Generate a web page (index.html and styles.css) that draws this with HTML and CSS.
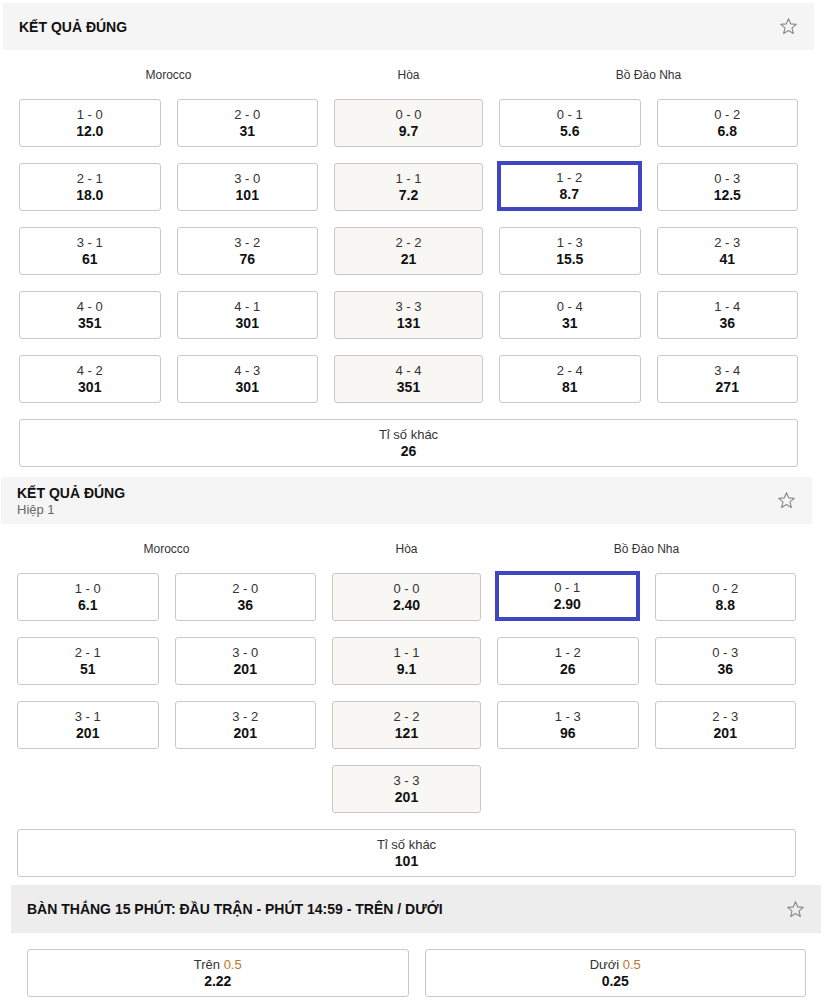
FILE: index.html
```html
<!DOCTYPE html>
<html lang="vi">
<head>
    <meta charset="UTF-8">
    <title>Kết quả đúng</title>
    <link rel="stylesheet" href="styles.css">
</head>
<body>
    <!-- ket qua dung: ca tran -->
    <div class="mk mk1">
      <div class="mkhd">
        <div class="ttl">
          <b>KẾT QUẢ ĐÚNG</b>
        </div>
        <svg class="star" viewBox="0 0 20 20"><polygon points="10,1.8 12.4,7.3 18.2,7.7 13.7,11.5 15.1,17.4 10,14.2 4.9,17.4 6.3,11.5 1.8,7.7 7.6,7.3"/></svg>
      </div>
      <div class="teams">
        <span class="tm2">Morocco</span>
        <span>Hòa</span>
        <span class="tm2">Bồ Đào Nha</span>
      </div>
      <div class="grid">
        <div class="c"><span>1 - 0</span><b>12.0</b></div>
        <div class="c"><span>2 - 0</span><b>31</b></div>
        <div class="c dr"><span>0 - 0</span><b>9.7</b></div>
        <div class="c"><span>0 - 1</span><b>5.6</b></div>
        <div class="c"><span>0 - 2</span><b>6.8</b></div>

        <div class="c"><span>2 - 1</span><b>18.0</b></div>
        <div class="c"><span>3 - 0</span><b>101</b></div>
        <div class="c dr"><span>1 - 1</span><b>7.2</b></div>
        <div class="c on"><span>1 - 2</span><b>8.7</b></div>
        <div class="c"><span>0 - 3</span><b>12.5</b></div>

        <div class="c"><span>3 - 1</span><b>61</b></div>
        <div class="c"><span>3 - 2</span><b>76</b></div>
        <div class="c dr"><span>2 - 2</span><b>21</b></div>
        <div class="c"><span>1 - 3</span><b>15.5</b></div>
        <div class="c"><span>2 - 3</span><b>41</b></div>

        <div class="c"><span>4 - 0</span><b>351</b></div>
        <div class="c"><span>4 - 1</span><b>301</b></div>
        <div class="c dr"><span>3 - 3</span><b>131</b></div>
        <div class="c"><span>0 - 4</span><b>31</b></div>
        <div class="c"><span>1 - 4</span><b>36</b></div>

        <div class="c"><span>4 - 2</span><b>301</b></div>
        <div class="c"><span>4 - 3</span><b>301</b></div>
        <div class="c dr"><span>4 - 4</span><b>351</b></div>
        <div class="c"><span>2 - 4</span><b>81</b></div>
        <div class="c"><span>3 - 4</span><b>271</b></div>

        <div class="c full"><span>Tỉ số khác</span><b>26</b></div>
      </div>
    </div>

    <!-- ket qua dung: hiep 1 -->
    <div class="mk mk2">
      <div class="mkhd">
        <div class="ttl">
          <b>KẾT QUẢ ĐÚNG</b>
          <small>Hiệp 1</small>
        </div>
        <svg class="star" viewBox="0 0 20 20"><polygon points="10,1.8 12.4,7.3 18.2,7.7 13.7,11.5 15.1,17.4 10,14.2 4.9,17.4 6.3,11.5 1.8,7.7 7.6,7.3"/></svg>
      </div>
      <div class="teams">
        <span class="tm2">Morocco</span>
        <span>Hòa</span>
        <span class="tm2">Bồ Đào Nha</span>
      </div>
      <div class="grid">
        <div class="c"><span>1 - 0</span><b>6.1</b></div>
        <div class="c"><span>2 - 0</span><b>36</b></div>
        <div class="c dr"><span>0 - 0</span><b>2.40</b></div>
        <div class="c on"><span>0 - 1</span><b>2.90</b></div>
        <div class="c"><span>0 - 2</span><b>8.8</b></div>

        <div class="c"><span>2 - 1</span><b>51</b></div>
        <div class="c"><span>3 - 0</span><b>201</b></div>
        <div class="c dr"><span>1 - 1</span><b>9.1</b></div>
        <div class="c"><span>1 - 2</span><b>26</b></div>
        <div class="c"><span>0 - 3</span><b>36</b></div>

        <div class="c"><span>3 - 1</span><b>201</b></div>
        <div class="c"><span>3 - 2</span><b>201</b></div>
        <div class="c dr"><span>2 - 2</span><b>121</b></div>
        <div class="c"><span>1 - 3</span><b>96</b></div>
        <div class="c"><span>2 - 3</span><b>201</b></div>

        <div class="c dr col3"><span>3 - 3</span><b>201</b></div>

        <div class="c full"><span>Tỉ số khác</span><b>101</b></div>
      </div>
    </div>

    <!-- ban thang 15 phut -->
    <div class="mk mk3">
      <div class="mkhd">
        <div class="ttl">
          <b>BÀN THẮNG 15 PHÚT: ĐẦU TRẬN - PHÚT 14:59 - TRÊN / DƯỚI</b>
        </div>
        <svg class="star" viewBox="0 0 20 20"><polygon points="10,1.8 12.4,7.3 18.2,7.7 13.7,11.5 15.1,17.4 10,14.2 4.9,17.4 6.3,11.5 1.8,7.7 7.6,7.3"/></svg>
      </div>
      <div class="ou">
        <div class="c"><span>Trên <em>0.5</em></span><b>2.22</b></div>
        <div class="c"><span>Dưới <em>0.5</em></span><b>0.25</b></div>
      </div>
    </div>
</body>
</html>
```

FILE: styles.css
```css
body{
  margin: 0;
  padding-top: 3px;
  font-family: "Liberation Sans", Arial, sans-serif;
  color: #333;
  background: #fff;
}

/* market block */
.mk{
  width: 811px;
}
.mk1{ margin-left: 3px; }
.mk2{ margin-left: 1px; margin-top: 10px; }
.mk3{ margin-left: 11px; margin-top: 8px; width: 810px; }

.mkhd{
  display: flex;
  align-items: center;
  justify-content: space-between;
  height: 47px;
  padding: 0 16px;
  background: #f5f5f5;
}
.mk3 .mkhd{
  height: 48px;
  background: #ededed;
}
.ttl b{
  display: block;
  font-size: 14px;
  color: #111;
}
.ttl small{
  display: block;
  font-size: 13px;
  color: #666;
  margin-top: 1px;
}
.star{
  width: 19px;
  height: 19px;
  margin-right: 0;
  fill: none;
  stroke: #8a8a8a;
  stroke-width: 1.2;
  stroke-linejoin: round;
}

/* team names */
.teams{
  display: grid;
  grid-template-columns: 1fr 149px 1fr;
  gap: 16px;
  width: 779px;
  margin-left: 16px;
  height: 49px;
  align-items: center;
  text-align: center;
  font-size: 12px;
  color: #333;
}

/* odds grid */
.grid{
  display: grid;
  grid-template-columns: 1fr 1fr 149px 1fr 1fr;
  gap: 16px;
  width: 779px;
  margin-left: 16px;
}
.c{
  height: 48px;
  box-sizing: border-box;
  border: 1px solid #c9c9c9;
  border-radius: 3px;
  background: #fff;
  display: flex;
  flex-direction: column;
  align-items: center;
  justify-content: center;
  line-height: 16px;
}
.c span{
  font-size: 13px;
  color: #333;
}
.c b{
  font-size: 14px;
  color: #111;
}
.c em{
  font-style: normal;
  color: #b8792a;
}
.dr{
  background: #f8f7f4;
}
.on{
  border: 4px solid #3e46c2;
  border-radius: 0;
  margin: -2px -1px -2px -2px;
  height: 50px;
}
.col3{
  grid-column: 3;
}
.full{
  grid-column: 1 / -1;
}

/* over / under */
.ou{
  display: grid;
  grid-template-columns: 1fr 1fr;
  gap: 16px;
  width: 779px;
  margin: 16px 0 0 16px;
}
```
